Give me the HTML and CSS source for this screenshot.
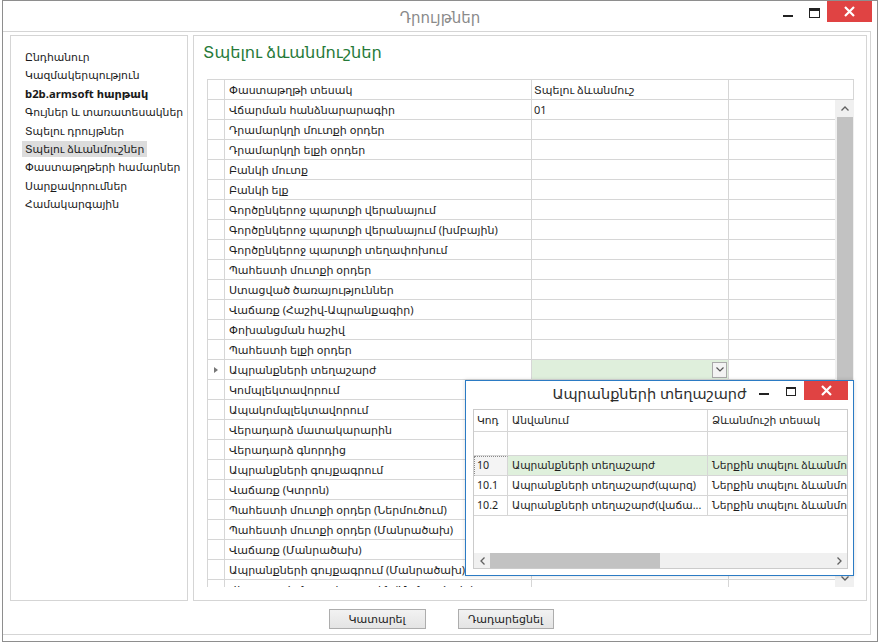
FILE: index.html
```html
<!DOCTYPE html>
<html lang="hy">
<head>
<meta charset="utf-8">
<title>Դրույթներ</title>
<link rel="stylesheet" href="styles.css">
</head>
<body>
<div class="window">
  <div class="titlebar">
    <div class="title">Դրույթներ</div>
    <div class="controls">
      <span class="c-min"></span>
      <span class="c-max"></span>
      <span class="c-close"><svg width="11" height="11" viewBox="0 0 11 11"><path d="M1 1L10 10M10 1L1 10" stroke="#fff" stroke-width="2.2" fill="none"/></svg></span>
    </div>
  </div>
  <div class="frame">
    <div class="panels">
      <div class="nav">
        <div class="nav-item">Ընդհանուր</div>
        <div class="nav-item">Կազմակերպություն</div>
        <div class="nav-item bold">b2b.armsoft հարթակ</div>
        <div class="nav-item">Գույներ և տառատեսակներ</div>
        <div class="nav-item">Տպելու դրույթներ</div>
        <div class="nav-item active">Տպելու ձևանմուշներ</div>
        <div class="nav-item">Փաստաթղթերի համարներ</div>
        <div class="nav-item">Սարքավորումներ</div>
        <div class="nav-item">Համակարգային</div>
      </div>
      <div class="main">
        <h1 class="heading">Տպելու ձևանմուշներ</h1>
        <div class="grid">
          <div class="row head">
            <div class="cell rh"></div>
            <div class="cell c1">Փաստաթղթի տեսակ</div>
            <div class="cell c2">Տպելու ձևանմուշ</div>
            <div class="cell c3h"></div>
          </div>
          <div class="gbody">
            <div class="rows">
              <div class="row"><div class="cell rh"></div><div class="cell c1">Վճարման հանձնարարագիր</div><div class="cell c2">01</div><div class="cell c3"></div></div>
              <div class="row"><div class="cell rh"></div><div class="cell c1">Դրամարկղի մուտքի օրդեր</div><div class="cell c2"></div><div class="cell c3"></div></div>
              <div class="row"><div class="cell rh"></div><div class="cell c1">Դրամարկղի ելքի օրդեր</div><div class="cell c2"></div><div class="cell c3"></div></div>
              <div class="row"><div class="cell rh"></div><div class="cell c1">Բանկի մուտք</div><div class="cell c2"></div><div class="cell c3"></div></div>
              <div class="row"><div class="cell rh"></div><div class="cell c1">Բանկի ելք</div><div class="cell c2"></div><div class="cell c3"></div></div>
              <div class="row"><div class="cell rh"></div><div class="cell c1">Գործընկերոջ պարտքի վերանայում</div><div class="cell c2"></div><div class="cell c3"></div></div>
              <div class="row"><div class="cell rh"></div><div class="cell c1">Գործընկերոջ պարտքի վերանայում (խմբային)</div><div class="cell c2"></div><div class="cell c3"></div></div>
              <div class="row"><div class="cell rh"></div><div class="cell c1">Գործընկերոջ պարտքի տեղափոխում</div><div class="cell c2"></div><div class="cell c3"></div></div>
              <div class="row"><div class="cell rh"></div><div class="cell c1">Պահեստի մուտքի օրդեր</div><div class="cell c2"></div><div class="cell c3"></div></div>
              <div class="row"><div class="cell rh"></div><div class="cell c1">Ստացված ծառայություններ</div><div class="cell c2"></div><div class="cell c3"></div></div>
              <div class="row"><div class="cell rh"></div><div class="cell c1">Վաճառք (Հաշիվ-Ապրանքագիր)</div><div class="cell c2"></div><div class="cell c3"></div></div>
              <div class="row"><div class="cell rh"></div><div class="cell c1">Փոխանցման հաշիվ</div><div class="cell c2"></div><div class="cell c3"></div></div>
              <div class="row"><div class="cell rh"></div><div class="cell c1">Պահեստի ելքի օրդեր</div><div class="cell c2"></div><div class="cell c3"></div></div>
              <div class="row current"><div class="cell rh"><span class="arrow"></span></div><div class="cell c1">Ապրանքների տեղաշարժ</div><div class="cell c2 editing"><span class="dd"><svg width="8" height="5" viewBox="0 0 8 5"><path d="M0.5 0.5L4 4L7.5 0.5" stroke="#555" stroke-width="1.2" fill="none"/></svg></span></div><div class="cell c3"></div></div>
              <div class="row"><div class="cell rh"></div><div class="cell c1">Կոմպլեկտավորում</div><div class="cell c2"></div><div class="cell c3"></div></div>
              <div class="row"><div class="cell rh"></div><div class="cell c1">Ապակոմպլեկտավորում</div><div class="cell c2"></div><div class="cell c3"></div></div>
              <div class="row"><div class="cell rh"></div><div class="cell c1">Վերադարձ մատակարարին</div><div class="cell c2"></div><div class="cell c3"></div></div>
              <div class="row"><div class="cell rh"></div><div class="cell c1">Վերադարձ գնորդից</div><div class="cell c2"></div><div class="cell c3"></div></div>
              <div class="row"><div class="cell rh"></div><div class="cell c1">Ապրանքների գույքագրում</div><div class="cell c2"></div><div class="cell c3"></div></div>
              <div class="row"><div class="cell rh"></div><div class="cell c1">Վաճառք (Կտրոն)</div><div class="cell c2"></div><div class="cell c3"></div></div>
              <div class="row"><div class="cell rh"></div><div class="cell c1">Պահեստի մուտքի օրդեր (Ներմուծում)</div><div class="cell c2"></div><div class="cell c3"></div></div>
              <div class="row"><div class="cell rh"></div><div class="cell c1">Պահեստի մուտքի օրդեր (Մանրածախ)</div><div class="cell c2"></div><div class="cell c3"></div></div>
              <div class="row"><div class="cell rh"></div><div class="cell c1">Վաճառք (Մանրածախ)</div><div class="cell c2"></div><div class="cell c3"></div></div>
              <div class="row"><div class="cell rh"></div><div class="cell c1">Ապրանքների գույքագրում (Մանրածախ)</div><div class="cell c2"></div><div class="cell c3"></div></div>
              <div class="row"><div class="cell rh"></div><div class="cell c1">Վերադարձ մատակարարին (Մանրածախ)</div><div class="cell c2"></div><div class="cell c3"></div></div>
            </div>
            <div class="vscroll">
              <div class="sb-up"><svg width="8" height="5" viewBox="0 0 8 5"><path d="M0.5 4.5L4 1L7.5 4.5" stroke="#606060" stroke-width="1.3" fill="none"/></svg></div>
              <div class="sb-thumb"></div>
              <div class="sb-down"><svg width="8" height="5" viewBox="0 0 8 5"><path d="M0.5 0.5L4 4L7.5 0.5" stroke="#606060" stroke-width="1.3" fill="none"/></svg></div>
            </div>
          </div>
        </div>
      </div>
    </div>
    <div class="actions">
      <button class="btn">Կատարել</button>
      <button class="btn">Դադարեցնել</button>
    </div>
  </div>

  <div class="popup">
    <div class="p-titlebar">
      <div class="p-title">Ապրանքների տեղաշարժ</div>
      <span class="p-min"></span>
      <span class="p-max"></span>
      <span class="p-close"><svg width="11" height="11" viewBox="0 0 11 11"><path d="M1 1L10 10M10 1L1 10" stroke="#fff" stroke-width="2.2" fill="none"/></svg></span>
    </div>
    <div class="pgrid">
      <div class="prow phead"><div class="pc k">Կոդ</div><div class="pc n">Անվանում</div><div class="pc t">Ձևանմուշի տեսակ</div></div>
      <div class="prow pfilter"><div class="pc k"></div><div class="pc n"></div><div class="pc t"></div></div>
      <div class="prow psel"><div class="pc k focus">10</div><div class="pc n">Ապրանքների տեղաշարժ</div><div class="pc t">Ներքին տպելու ձևանմուշ</div></div>
      <div class="prow"><div class="pc k">10.1</div><div class="pc n">Ապրանքների տեղաշարժ(պարզ)</div><div class="pc t">Ներքին տպելու ձևանմուշ</div></div>
      <div class="prow"><div class="pc k">10.2</div><div class="pc n">Ապրանքների տեղաշարժ(վաճա...</div><div class="pc t">Ներքին տպելու ձևանմուշ</div></div>
      <div class="pspacer"></div>
      <div class="hscroll">
        <span class="hs-left"><svg width="5" height="8" viewBox="0 0 5 8"><path d="M4.5 0.5L1 4L4.5 7.5" stroke="#606060" stroke-width="1.3" fill="none"/></svg></span>
        <span class="hs-thumb"></span>
        <span class="hs-track"></span>
        <span class="hs-right"><svg width="5" height="8" viewBox="0 0 5 8"><path d="M0.5 0.5L4 4L0.5 7.5" stroke="#606060" stroke-width="1.3" fill="none"/></svg></span>
      </div>
    </div>
  </div>
</div>
</body>
</html>
```

FILE: styles.css
```css
* { box-sizing: border-box; }

body {
  margin: 0;
  background: #ffffff;
  font-family: "Noto Sans", "DejaVu Sans", sans-serif;
  color: #222;
}

.window {
  position: relative;
  width: 876px;
  height: 642px;
  margin-left: 2px;
  border: 1px solid #8e8e8e;
  background: #fff;
}

/* ---------- title bar ---------- */
.titlebar {
  height: 30px;
  display: grid;
  grid-template-columns: 1fr auto 1fr;
  align-items: start;
}
.title {
  grid-column: 2;
  font-size: 15px;
  line-height: 32px;
  color: #8a8a8a;
}
.controls {
  grid-column: 3;
  justify-self: end;
  display: flex;
  align-items: flex-start;
  margin-right: 5px;
}
.c-min {
  width: 10px;
  height: 2px;
  margin-top: 14px;
  margin-right: 16px;
  background: #222;
}
.c-max {
  width: 11px;
  height: 10px;
  margin-top: 7px;
  margin-right: 7px;
  border: 1px solid #222;
  border-top-width: 3px;
}
.c-close {
  width: 45px;
  height: 21px;
  background: #e04343;
  display: flex;
  align-items: center;
  justify-content: center;
}

/* ---------- frame ---------- */
.frame {
  width: 868px;
  height: 604px;
  border: 1px solid #d5d5d5;
  border-left: none;
  display: flex;
  flex-direction: column;
}
.panels {
  display: flex;
  gap: 5px;
  padding: 3px 0 0 7px;
}

/* left navigation */
.nav {
  width: 178px;
  height: 566px;
  border: 1px solid #d5d5d5;
  padding: 13px 0 0 11px;
}
.nav-item {
  width: fit-content;
  height: 16px;
  line-height: 16px;
  margin-bottom: 2.4px;
  padding: 0 3px;
  font-size: 10.8px;
  color: #1a1a1a;
  white-space: nowrap;
}
.nav-item.bold { font-weight: bold; font-size: 11.3px; }
.nav-item.active { background: #dcdcdc; }

/* main panel */
.main {
  width: 674px;
  height: 566px;
  border: 1px solid #d5d5d5;
  padding-left: 13px;
}
.heading {
  margin: 5px 0 0 -4px;
  height: 22px;
  line-height: 22px;
  font-size: 16.2px;
  font-weight: normal;
  color: #267a39;
  white-space: nowrap;
}

/* data grid */
.grid {
  margin-top: 16px;
  width: 647px;
  height: 508px;
  overflow: hidden;
  border-left: 1px solid #d6d6d6;
  border-top: 1px solid #d6d6d6;
}
.row {
  display: flex;
  height: 20px;
}
.cell {
  height: 20px;
  border-right: 1px solid #d6d6d6;
  border-bottom: 1px solid #d6d6d6;
  font-size: 11px;
  line-height: 19px;
  padding-left: 4px;
  white-space: nowrap;
  overflow: hidden;
  color: #1e1e1e;
}
.cell.rh { width: 17px; padding: 0; position: relative; }
.cell.c1 { width: 307px; }
.cell.c2 { width: 197px; padding-left: 2px; }
.cell.c3 { width: 106px; border-right: none; }
.cell.c3h { width: 125px; }

.arrow {
  position: absolute;
  left: 6px;
  top: 7px;
  width: 0;
  height: 0;
  border-top: 3px solid transparent;
  border-bottom: 3px solid transparent;
  border-left: 4px solid #777;
}
.cell.editing {
  background: #dfefdc;
  display: flex;
  justify-content: flex-end;
  align-items: center;
  padding-right: 1px;
}
.dd {
  width: 15px;
  height: 16px;
  border: 1px solid #a9a9a9;
  background: #f3f3f3;
  display: flex;
  align-items: center;
  justify-content: center;
}

.gbody {
  display: flex;
  height: 487px;
}
.rows {
  width: 627px;
  height: 487px;
  overflow: hidden;
}
.vscroll {
  width: 19px;
  height: 487px;
  background: #f0f0f0;
  display: flex;
  flex-direction: column;
  padding: 0 1px 0 2px;
}
.sb-up, .sb-down {
  height: 17px;
  display: flex;
  align-items: center;
  justify-content: center;
}
.sb-thumb {
  flex: 1;
  background: #c2c2c2;
  margin-bottom: 3px;
}

/* bottom buttons */
.actions {
  height: 33px;
  display: flex;
  justify-content: center;
  gap: 32px;
  padding: 8px 0 0 9px;
}
.btn {
  height: 20px;
  width: 97px;
  padding: 0;
  border: 1px solid #adadad;
  background: linear-gradient(#f2f2f2, #e4e4e4);
  font-family: "Noto Sans", "DejaVu Sans", sans-serif;
  font-size: 11px;
  color: #222;
  line-height: 18px;
}
.btn + .btn { width: 96px; }

/* ---------- popup ---------- */
.popup {
  position: absolute;
  left: 462px;
  top: 379px;
  width: 389px;
  height: 196px;
  border: 1px solid #2b7bc4;
  background: #fff;
  box-shadow: 0 0 4px rgba(0,0,0,0.15);
}
.p-titlebar {
  height: 28px;
  display: flex;
  align-items: flex-start;
  padding-right: 5px;
}
.p-title {
  flex: 1;
  text-align: center;
  font-size: 14.5px;
  line-height: 25px;
  color: #2d2d2d;
  padding-left: 74px;
  white-space: nowrap;
}
.p-min {
  width: 10px;
  height: 2px;
  margin-top: 12px;
  margin-right: 17px;
  background: #222;
}
.p-max {
  width: 10px;
  height: 9px;
  margin-top: 6px;
  margin-right: 8px;
  border: 1px solid #222;
  border-top-width: 2px;
}
.p-close {
  width: 44px;
  height: 19px;
  background: #e04343;
  display: flex;
  align-items: center;
  justify-content: center;
}

.pgrid {
  margin-left: 7px;
  width: 375px;
  height: 160px;
  border: 1px solid #cbcbcb;
  display: flex;
  flex-direction: column;
  overflow: hidden;
}
.prow {
  display: flex;
  height: 20px;
  flex: none;
}
.prow.phead { height: 22px; }
.prow.pfilter { height: 24px; }
.pc {
  border-bottom: 1px solid #d6d6d6;
  border-right: 1px solid #d6d6d6;
  font-size: 10.7px;
  line-height: 19px;
  padding-left: 3px;
  white-space: nowrap;
  overflow: hidden;
  color: #1e1e1e;
  flex: none;
}
.phead .pc { line-height: 21px; }
.pc.k { width: 34px; }
.pc.n { width: 200px; padding-left: 4px; }
.pc.t { width: 150px; border-right: none; padding-left: 4px; }
.psel .pc.n, .psel .pc.t { background: #dff0dc; }
.pc.focus {
  background: #f4f4f4;
  border: 1px dotted #8a8a8a;
  border-right: 1px solid #d6d6d6;
  border-bottom: 1px solid #d6d6d6;
  padding-left: 2px;
  line-height: 17px;
}
.pspacer { flex: 1; }
.hscroll {
  height: 15px;
  flex: none;
  display: flex;
  background: #f0f0f0;
  align-items: stretch;
}
.hs-left, .hs-right {
  width: 16px;
  display: flex;
  align-items: center;
  justify-content: center;
}
.hs-thumb {
  width: 170px;
  background: #c2c2c2;
}
.hs-track { flex: 1; }
```
